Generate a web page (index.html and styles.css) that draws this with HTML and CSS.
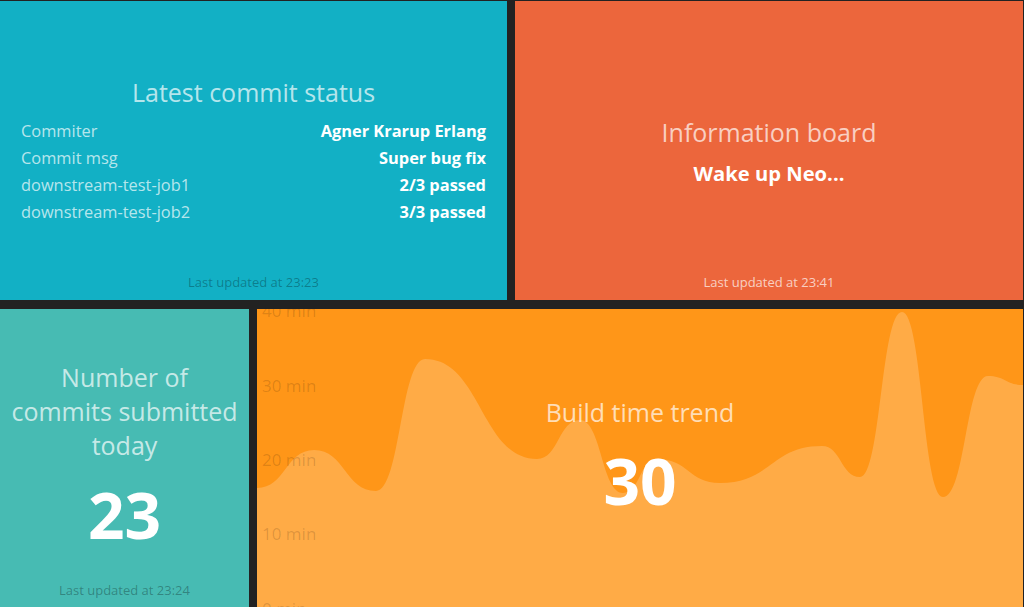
FILE: index.html
```html
<!DOCTYPE html>
<html lang="en">
<head>
<meta charset="utf-8">
<title>Dashboard</title>
<link rel="stylesheet" href="styles.css">
</head>
<body>
<main class="board">
  <div class="row row-top">
    <section class="widget widget-list">
      <div class="content">
        <h1 class="title">Latest commit status</h1>
        <ul class="items">
          <li><span class="label">Commiter</span><span class="val">Agner Krarup Erlang</span></li>
          <li><span class="label">Commit msg</span><span class="val">Super bug fix</span></li>
          <li><span class="label">downstream-test-job1</span><span class="val">2/3 passed</span></li>
          <li><span class="label">downstream-test-job2</span><span class="val">3/3 passed</span></li>
        </ul>
      </div>
      <p class="updated dark">Last updated at 23:23</p>
    </section>
    <section class="widget widget-text">
      <div class="content">
        <h1 class="title">Information board</h1>
        <h3 class="text">Wake up Neo...</h3>
      </div>
      <p class="updated light">Last updated at 23:41</p>
    </section>
  </div>
  <div class="row row-bottom">
    <section class="widget widget-number">
      <div class="content">
        <h1 class="title">Number of commits submitted today</h1>
        <h2 class="value">23</h2>
      </div>
      <p class="updated dark">Last updated at 23:24</p>
    </section>
    <section class="widget widget-graph">
      <svg class="chart" viewBox="0 0 766 299" preserveAspectRatio="none" aria-hidden="true">
        <path class="area" d="M0,179 C28.5,179 28.5,141 57,141 C88,141 88,182 119,182 C143.5,182 143.5,50 168,50 C224,50 224,150 280,150 C301.5,150 301.5,111 323,111 C344.5,111 344.5,184 366,184 C383,184 383,150 400,150 C431.5,150 431.5,174 463,174 C514,174 514,137 565,137 C584,137 584,168 603,168 C624,168 624,3 645,3 C665.5,3 665.5,188 686,188 C708.5,188 708.5,67 731,67 C748.5,67 748.5,76 766,76 L766,299 L0,299 Z"/>
      </svg>
      <div class="ticks">
        <span class="tick">40 min</span>
        <span class="tick">30 min</span>
        <span class="tick">20 min</span>
        <span class="tick">10 min</span>
        <span class="tick">0 min</span>
      </div>
      <div class="content">
        <h1 class="title">Build time trend</h1>
        <h2 class="value">30</h2>
      </div>
    </section>
  </div>
</main>
</body>
</html>
```

FILE: styles.css
```css
* { box-sizing: border-box; }

html, body {
  margin: 0;
  padding: 0;
  background: #222222;
  overflow: hidden;
  height: 607px;
}

body {
  font-family: "Open Sans", "Liberation Sans", sans-serif;
  color: #ffffff;
}

.board {
  width: 1023px;
  padding-top: 1px;
  display: flex;
  flex-direction: column;
  gap: 9px;
}

.row {
  display: flex;
  gap: 8px;
  height: 299px;
}

.widget {
  position: relative;
  height: 299px;
  overflow: hidden;
  display: flex;
  flex-direction: column;
  justify-content: center;
  align-items: stretch;
}

.widget-list { width: 507px; background: #12b0c5; }
.widget-text { width: 508px; background: #ec663c; }
.widget-number { width: 249px; background: #47bbb3; }
.widget-graph { width: 766px; background: #ff9618; }

.content {
  position: relative;
  z-index: 2;
  display: flex;
  flex-direction: column;
  align-items: center;
  text-align: center;
}

.title {
  margin: 0;
  font-size: 25px;
  font-weight: 400;
  line-height: 34px;
  color: rgba(255, 255, 255, 0.7);
}

/* list widget */
.widget-list .content { padding: 0 21px 0 21px; align-items: stretch; margin-top: -2px; }
.widget-list .title { margin-bottom: 8px; }
.items {
  list-style: none;
  margin: 0;
  padding: 0;
}
.items li {
  display: flex;
  justify-content: space-between;
  font-size: 16.4px;
  line-height: 27px;
}
.items .label { color: rgba(255, 255, 255, 0.7); }
.items .val { font-weight: 700; color: #ffffff; }

/* text widget */
.widget-text .title { margin-bottom: 9px; }
.widget-text .content { margin-top: 2px; }
.text {
  margin: 0;
  font-size: 20.2px;
  font-weight: 700;
  line-height: 30px;
  color: #ffffff;
}

/* number widget */
.widget-number .content { padding: 0 9px; margin-top: -2px; }
.widget-number .title { max-width: 230px; margin-bottom: 13px; }
.value {
  margin: 0;
  font-size: 64px;
  font-weight: 700;
  line-height: 80px;
  color: #ffffff;
}

/* graph widget */
.chart {
  position: absolute;
  left: 0;
  top: 0;
  width: 766px;
  height: 299px;
  z-index: 0;
}
.area { fill: rgba(255, 255, 255, 0.2); }

.ticks {
  position: absolute;
  left: 5px;
  top: -9.5px;
  z-index: 1;
  display: flex;
  flex-direction: column;
}
.tick {
  font-size: 17px;
  color: rgba(0, 0, 0, 0.14);
  display: flex;
  align-items: center;
  height: 74.4px;
}
.ticks .tick:first-child { margin-top: -26px; }

.widget-graph .content { margin-top: -1px; }
.widget-graph .title { margin-bottom: 12px; }

/* updated at */
.updated {
  position: absolute;
  left: 0;
  right: 0;
  bottom: 10px;
  margin: 0;
  text-align: center;
  font-size: 13px;
  line-height: 16px;
  z-index: 2;
}
.updated.dark { color: rgba(0, 0, 0, 0.3); }
.updated.light { color: rgba(255, 255, 255, 0.7); }
```
